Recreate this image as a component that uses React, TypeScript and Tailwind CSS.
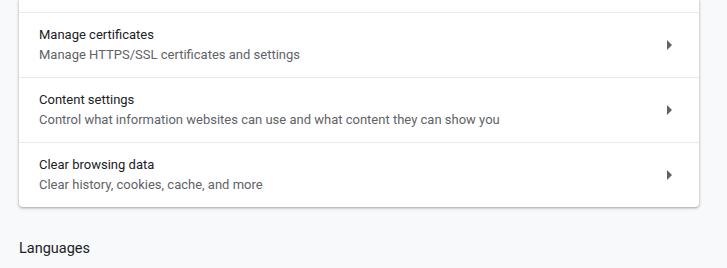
import React from 'react';

interface RowProps {
  title: string;
  subtitle: string;
}

const ArrowRight = () => (
  <svg className="w-6 h-6 text-[#5f6368]" viewBox="0 0 24 24" fill="currentColor">
    <path d="M10 17l5-5-5-5v10z" />
  </svg>
);

const Row: React.FC<RowProps> = ({ title, subtitle }) => (
  <div className="flex items-center h-[65px] border-t border-[#e8eaed] pl-5 pr-[18px]">
    <div className="flex-1 flex flex-col">
      <span className="text-[13px] leading-[20px] text-[#202124]">{title}</span>
      <span className="text-[13px] leading-[20px] text-[#5f6368]">{subtitle}</span>
    </div>
    <ArrowRight />
  </div>
);

export default function App() {
  return (
    <div
      className="w-[727px] h-[268px] overflow-hidden bg-[#f8f9fa] px-[19px]"
      style={{ fontFamily: 'Roboto, "Noto Sans", sans-serif' }}
    >
      <div className="w-[680px] bg-white rounded-b shadow-[0_1px_2px_0_rgba(60,64,67,0.3),0_1px_3px_1px_rgba(60,64,67,0.15)]">
        <div className="h-3" />
        <Row title="Manage certificates" subtitle="Manage HTTPS/SSL certificates and settings" />
        <Row
          title="Content settings"
          subtitle="Control what information websites can use and what content they can show you"
        />
        <Row title="Clear browsing data" subtitle="Clear history, cookies, cache, and more" />
      </div>
      <div className="pt-[32px] text-[14.5px] leading-5 text-[#202124]">Languages</div>
    </div>
  );
}
